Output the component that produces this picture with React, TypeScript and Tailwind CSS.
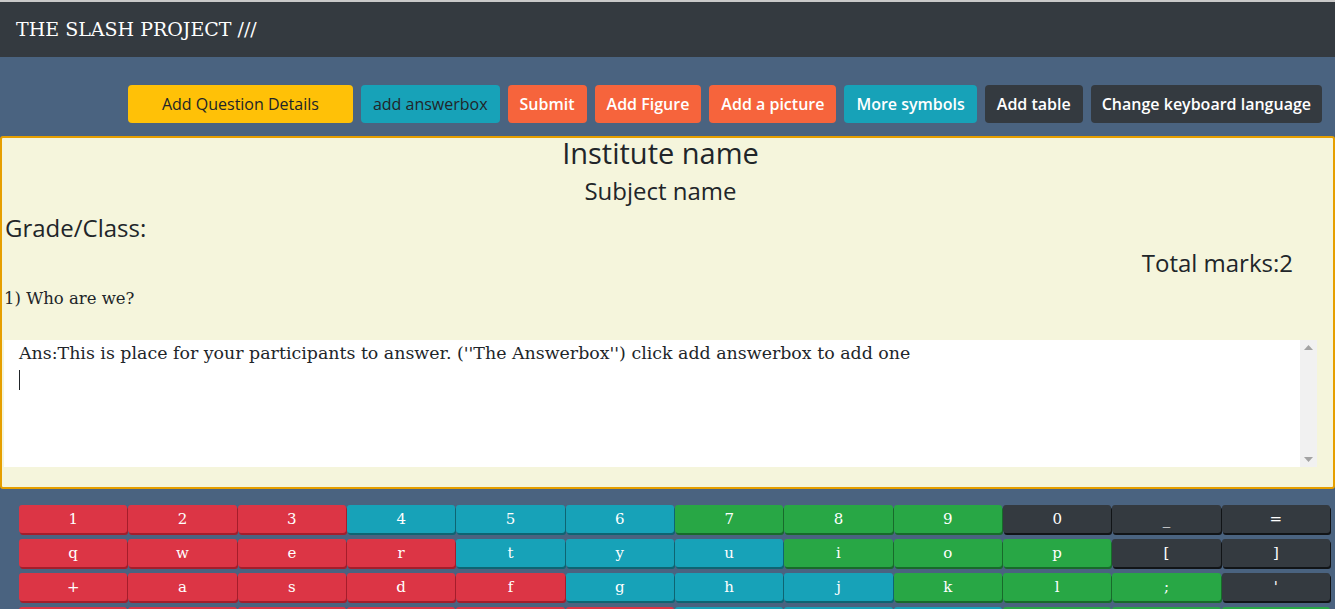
import React from 'react';

const serif = "font-['DejaVu_Serif',serif]";
const sans = "font-['Open_Sans',sans-serif]";

type Btn = { label: string; cls: string };

const buttons: Btn[] = [
  { label: 'Add Question Details', cls: 'w-[225px] bg-[#ffc107] text-[#212529]' },
  { label: 'add answerbox', cls: 'px-[12px] bg-[#17a2b8] text-[#212529]' },
  { label: 'Submit', cls: 'px-[12px] bg-[#f6643c] text-white font-semibold' },
  { label: 'Add Figure', cls: 'px-[12px] bg-[#f6643c] text-white font-semibold' },
  { label: 'Add a picture', cls: 'px-[12px] bg-[#f6643c] text-white font-semibold' },
  { label: 'More symbols', cls: 'px-[12px] bg-[#17a2b8] text-white font-semibold' },
  { label: 'Add table', cls: 'px-[12px] bg-[#343a40] text-white font-semibold' },
  { label: 'Change keyboard language', cls: 'px-[11px] bg-[#343a40] text-white font-semibold' },
];

// r = red, t = teal, g = green, d = dark
const keyColors: Record<string, string> = {
  r: 'bg-[#dc3545] shadow-[1px_2px_0_#a51d2b]',
  t: 'bg-[#17a2b8] shadow-[1px_2px_0_#0e6472]',
  g: 'bg-[#28a745] shadow-[1px_2px_0_#186a2b]',
  d: 'bg-[#343a40] shadow-[1px_2px_0_#111417]',
};

const rows: [string, string][][] = [
  [['1', 'r'], ['2', 'r'], ['3', 'r'], ['4', 't'], ['5', 't'], ['6', 't'], ['7', 'g'], ['8', 'g'], ['9', 'g'], ['0', 'd'], ['_', 'd'], ['=', 'd']],
  [['q', 'r'], ['w', 'r'], ['e', 'r'], ['r', 'r'], ['t', 't'], ['y', 't'], ['u', 't'], ['i', 'g'], ['o', 'g'], ['p', 'g'], ['[', 'd'], [']', 'd']],
  [['+', 'r'], ['a', 'r'], ['s', 'r'], ['d', 'r'], ['f', 'r'], ['g', 't'], ['h', 't'], ['j', 't'], ['k', 'g'], ['l', 'g'], [';', 'g'], ["'", 'd']],
  [['\\', 'r'], ['z', 'r'], ['x', 'r'], ['c', 'r'], ['v', 'r'], ['b', 'r'], ['n', 't'], ['m', 't'], [',', 't'], ['.', 'g'], ['/', 'g'], ['?', 'g']],
];

const answerText =
  "Ans:This is place for your participants to answer. (''The Answerbox'') click add answerbox to add one\n";

export default function App() {
  return (
    <div className="min-h-screen bg-[#4a6380] overflow-hidden">
      <header className="h-[57px] bg-[#343a40] border-t-2 border-[#c9c9c9] flex items-center px-4">
        <span className={`${serif} text-[19px] text-white`}>THE SLASH PROJECT ///</span>
      </header>

      <div className="flex justify-end gap-[8px] pr-[13px] mt-[28px]">
        {buttons.map((b) => (
          <button
            key={b.label}
            className={`${sans} h-[38px] rounded-[4px] text-[16px] ${b.cls}`}
          >
            {b.label}
          </button>
        ))}
      </div>

      <section className="mt-[13px] bg-[#f5f5dc] border-2 border-[#e69f00] rounded-[3px] text-[#212529] pb-[20px]">
        <div className={`${sans} text-center text-[29px] h-[30px] leading-[30px] pr-[14px]`}>Institute name</div>
        <div className={`${sans} text-center text-[24px] h-[46px] leading-[46px] pr-[14px]`}>Subject name</div>
        <div className={`${sans} text-[24px] h-[28px] leading-[28px] pl-[3px]`}>Grade/Class:</div>
        <div className={`${sans} text-[24px] h-[42px] leading-[42px] text-right pr-[40px]`}>Total marks:2</div>
        <div className={`${serif} text-[16.5px] h-[30px] leading-[30px] pl-[2px]`}>1) Who are we?</div>
        <div className="relative flex mt-[26px] ml-[2px] mr-[16px] h-[127px] bg-white">
          <textarea
            readOnly
            spellCheck={false}
            defaultValue={answerText}
            className={`${serif} block flex-1 h-full bg-white text-[17.4px] leading-[24px] text-[#212529] pl-[15px] pt-[1px] resize-none overflow-hidden outline-none`}
          />
          <div className="w-[17px] h-full bg-[#f1f1f1] flex flex-col justify-between items-center py-[5px]">
            <svg width="9" height="5" viewBox="0 0 9 5"><path d="M0 5 L4.5 0 L9 5 Z" fill="#a3a3a3" /></svg>
            <svg width="9" height="5" viewBox="0 0 9 5"><path d="M0 0 L4.5 5 L9 0 Z" fill="#a3a3a3" /></svg>
          </div>
          <span className="absolute left-[15px] top-[30px] w-px h-[20px] bg-[#212529]" />
        </div>
      </section>

      <div className="grid grid-cols-12 gap-x-px gap-y-[6px] pl-[19px] pr-[5px] pt-[16px]">
        {rows.flat().map(([label, c], i) => (
          <div
            key={i}
            className={`${serif} h-[28px] rounded-[3px] flex items-center justify-center text-white text-[15px] ${keyColors[c]}`}
          >
            {label}
          </div>
        ))}
      </div>
    </div>
  );
}
